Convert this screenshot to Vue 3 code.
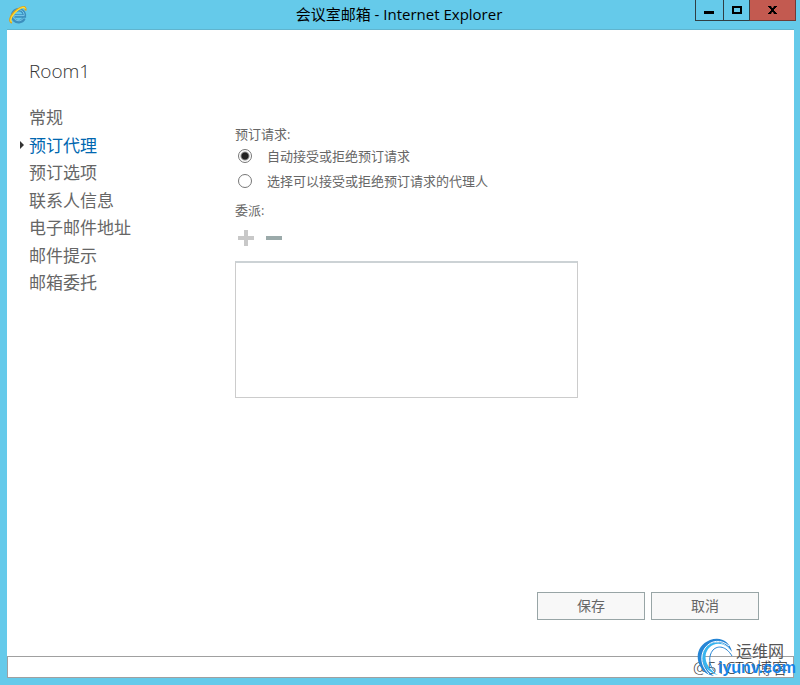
<template>
  <div class="window">
    <header class="titlebar">
      <svg class="ie-icon" viewBox="0 0 18 18" aria-hidden="true">
        <path d="M15 12.200A6 6 0 1 1 15.400 8.600V10H6" fill="none" stroke="#3b8fbe" stroke-width="3.400" />
        <path d="M14.500 12A5.600 5.600 0 1 1 15.200 8.500V9.600H6" fill="none" stroke="#7cc9ea" stroke-width="1" />
        <path d="M3 16.800C-1.200 15.600 2 8 8.500 3.600 13 .4 17.600-.2 16.400 4.500" fill="none" stroke="#dda21b" stroke-width="2" />
        <path d="M2.500 16C.2 13.800 4 7.300 9.500 3.400c3.500-2.300 6.500-3 6.600-.4" fill="none" stroke="#ffdf38" stroke-width="1.200" />
      </svg>
      <h1 class="titlebar__text">会议室邮箱 - Internet Explorer</h1>
      <div class="controls">
        <button type="button" class="control control--min" aria-label="最小化">
          <svg viewBox="0 0 12 12"><path d="M0 7h10v3H0z" /></svg>
        </button>
        <button type="button" class="control control--max" aria-label="最大化">
          <svg viewBox="0 0 12 12"><path d="M1 2h10v8H1zM3 4v4h6V4z" fill-rule="evenodd" /></svg>
        </button>
        <button type="button" class="control control--close" aria-label="关闭">
          <svg viewBox="0 0 12 12"><path d="M1 2h3l1 2h1l1-2h3v1H9v1H8v1H7v2h1v1h1v1h1v1H7L6 8H5l-1 2H1V9h1V8h1V7h1V5H3V4H2V3H1z" /></svg>
        </button>
      </div>
    </header>

    <main class="page">
      <h2 class="page__title">Room1</h2>
      <div class="page__body">
        <nav class="menu">
          <a
            v-for="item in items"
            :key="item"
            href="#"
            class="menu__item"
            :class="{ 'menu__item--active': item === current }"
            @click.prevent="current = item"
          >{{ item }}</a>
        </nav>

        <form class="form" @submit.prevent>
          <fieldset class="group">
            <legend class="label">预订请求:</legend>
            <label v-for="option in options" :key="option.value" class="radio">
              <input v-model="mode" type="radio" name="mode" :value="option.value">
              <span>{{ option.text }}</span>
            </label>
          </fieldset>

          <label class="label" for="delegates">委派:</label>
          <div class="tools">
            <button type="button" class="tool tool--add" aria-label="添加">
              <svg viewBox="0 0 16 16"><path d="M6 0h4v6h6v4h-6v6H6v-6H0V6h6z" /></svg>
            </button>
            <button type="button" class="tool tool--remove" aria-label="删除">
              <svg viewBox="0 0 16 16"><path d="M0 6h16v4H0z" /></svg>
            </button>
          </div>
          <select id="delegates" class="list" multiple></select>
        </form>
      </div>

      <footer class="actions">
        <button type="button" class="action">保存</button>
        <button type="button" class="action">取消</button>
      </footer>
    </main>

    <div class="statusbar"></div>

    <div class="watermark">
      <span class="watermark__blog">@51CTO博客</span>
      <svg class="watermark__logo" viewBox="0 0 44 40" aria-hidden="true">
        <path d="M36 15C34 4 24-1 14 3 2 8-1 19 4 29c3 6 8 9 14 10C7 31 4 20 9 12 15 3 28 2 36 15z" fill="#2585d5" />
        <path d="M36 16C30 6 20 4 13 11 6 19 10 31 22 38 8 34 3 22 8 13 14 3 28 2 36 16z" fill="#38b5ef" />
        <path d="M33 9C25 2 15 3 9 11c-6 9-3 19 4 26" fill="none" stroke="#fff" stroke-width="1" />
        <path d="M36 19C30 9 22 8 17 13c-5 6-4 15 1 21" fill="none" stroke="#2585d5" stroke-width="1" />
      </svg>
      <span class="watermark__name">运维网</span>
      <span class="watermark__site">iyunv.com</span>
    </div>
  </div>
</template>

<script setup>
import { ref } from 'vue';

const items = ['常规', '预订代理', '预订选项', '联系人信息', '电子邮件地址', '邮件提示', '邮箱委托'];
const current = ref('预订代理');

const options = [
  { value: 'auto', text: '自动接受或拒绝预订请求' },
  { value: 'delegate', text: '选择可以接受或拒绝预订请求的代理人' }
];
const mode = ref('auto');
</script>

<style>
body {
  margin: 0;
}
</style>

<style scoped>
.window {
  position: relative;
  display: flex;
  flex-direction: column;
  box-sizing: border-box;
  min-height: 100vh;
  padding: 0 6px 7px 7px;
  background: #65caea;
  color: #666;
  font-family: "Open Sans", "Noto Sans CJK SC", sans-serif;
  overflow: hidden;
}

button {
  padding: 0;
  font-family: inherit;
}

.titlebar {
  display: flex;
  align-items: center;
  height: 29px;
  border-bottom: 1px solid #60b4ce;
}

.ie-icon {
  width: 18px;
  height: 18px;
  margin-left: 2px;
}

.titlebar__text {
  flex: 1;
  margin: 0 0 0 76px;
  color: #000;
  font-size: 15px;
  font-weight: 400;
  line-height: 26px;
  height: 28px;
  text-align: center;
}

.controls {
  display: flex;
  align-self: flex-start;
  margin-right: -2px;
}

.control {
  display: flex;
  align-items: center;
  justify-content: center;
  width: 28px;
  height: 21px;
  border: 1px solid #303e43;
  border-top: 0;
  border-right: 0;
  background: #65caea;
}

.control svg {
  width: 12px;
  height: 12px;
}

.control--max {
  width: 26px;
}

.control--close {
  width: 47px;
  border-right: 1px solid #713a35;
  border-bottom-color: #713a35;
  background: #c35a50;
}

.page {
  display: flex;
  flex: 1;
  flex-direction: column;
  padding: 26px 35px 36px 22px;
  background: #fff;
}

.page__title {
  margin: 0 0 18px;
  color: #333;
  font-size: 19px;
  font-weight: 300;
  line-height: 30px;
}

.page__body {
  display: flex;
  flex: 1;
}

.menu {
  display: grid;
  grid-template-rows: repeat(7, 1fr);
  width: 206px;
  height: 193px;
}

.menu__item {
  position: relative;
  color: #666;
  font-size: 17px;
  font-weight: 400;
  line-height: 27px;
  text-decoration: none;
}

.menu__item--active {
  color: #0067b0;
}

.menu__item--active::before {
  position: absolute;
  top: 9px;
  left: -9px;
  border: 4px solid transparent;
  border-right: 0;
  border-left-color: #333;
  content: "";
}

.form {
  flex: 1;
  padding-top: 22px;
}

.group {
  margin: 0 0 7px;
  padding: 0;
  border: 0;
}

.label {
  display: block;
  padding: 0;
  font-size: 13px;
  line-height: 20px;
}

.group .label {
  line-height: 17px;
}

.radio {
  display: flex;
  align-items: center;
  height: 25px;
  font-size: 13px;
}

.radio input {
  appearance: none;
  box-sizing: border-box;
  width: 14px;
  height: 14px;
  margin: 0 15px 0 3px;
  border: 1px solid #777;
  border-radius: 50%;
  background: #fff;
}

.radio input:checked {
  background: radial-gradient(circle, #222 0 3px, #fff 5px);
}

.tools {
  display: flex;
  gap: 12px;
  padding: 10px 0 15px 3px;
}

.tool {
  width: 16px;
  height: 16px;
  border: 0;
  background: none;
}

.tool svg {
  display: block;
}

.tool--add {
  fill: #c8c8c8;
}

.tool--remove {
  fill: #9baaaa;
}

.list {
  display: block;
  box-sizing: border-box;
  width: 100%;
  max-width: 343px;
  height: 137px;
  border: 1px solid #ccc;
  border-top: 2px solid #ccd2d5;
  border-radius: 0;
  background: #fff;
}

.actions {
  display: flex;
  justify-content: flex-end;
  gap: 6px;
}

.action {
  width: 108px;
  height: 28px;
  border: 1px solid #98a5a6;
  background: #f8f8f8;
  color: #666;
  font-size: 14px;
  line-height: 24px;
}

.statusbar {
  height: 20px;
  border: 1px solid #a0a0a0;
  background: #fff;
}

.watermark {
  position: absolute;
  right: 0;
  bottom: 0;
  width: 108px;
  height: 50px;
  pointer-events: none;
  white-space: nowrap;
}

.watermark__blog,
.watermark__logo,
.watermark__name,
.watermark__site {
  position: absolute;
}

.watermark__blog {
  top: 23px;
  left: 1px;
  color: #333;
  font-size: 16px;
  font-weight: 300;
  line-height: 20px;
}

.watermark__logo {
  top: 2px;
  left: 4px;
  width: 44px;
  height: 40px;
}

.watermark__name {
  top: 6px;
  left: 44px;
  color: #555;
  font-size: 16px;
  line-height: 20px;
}

.watermark__site {
  top: 23px;
  left: 26px;
  color: #1684e8;
  font-family: "Liberation Sans", sans-serif;
  font-size: 16px;
  font-weight: 700;
  line-height: 20px;
}
</style>
